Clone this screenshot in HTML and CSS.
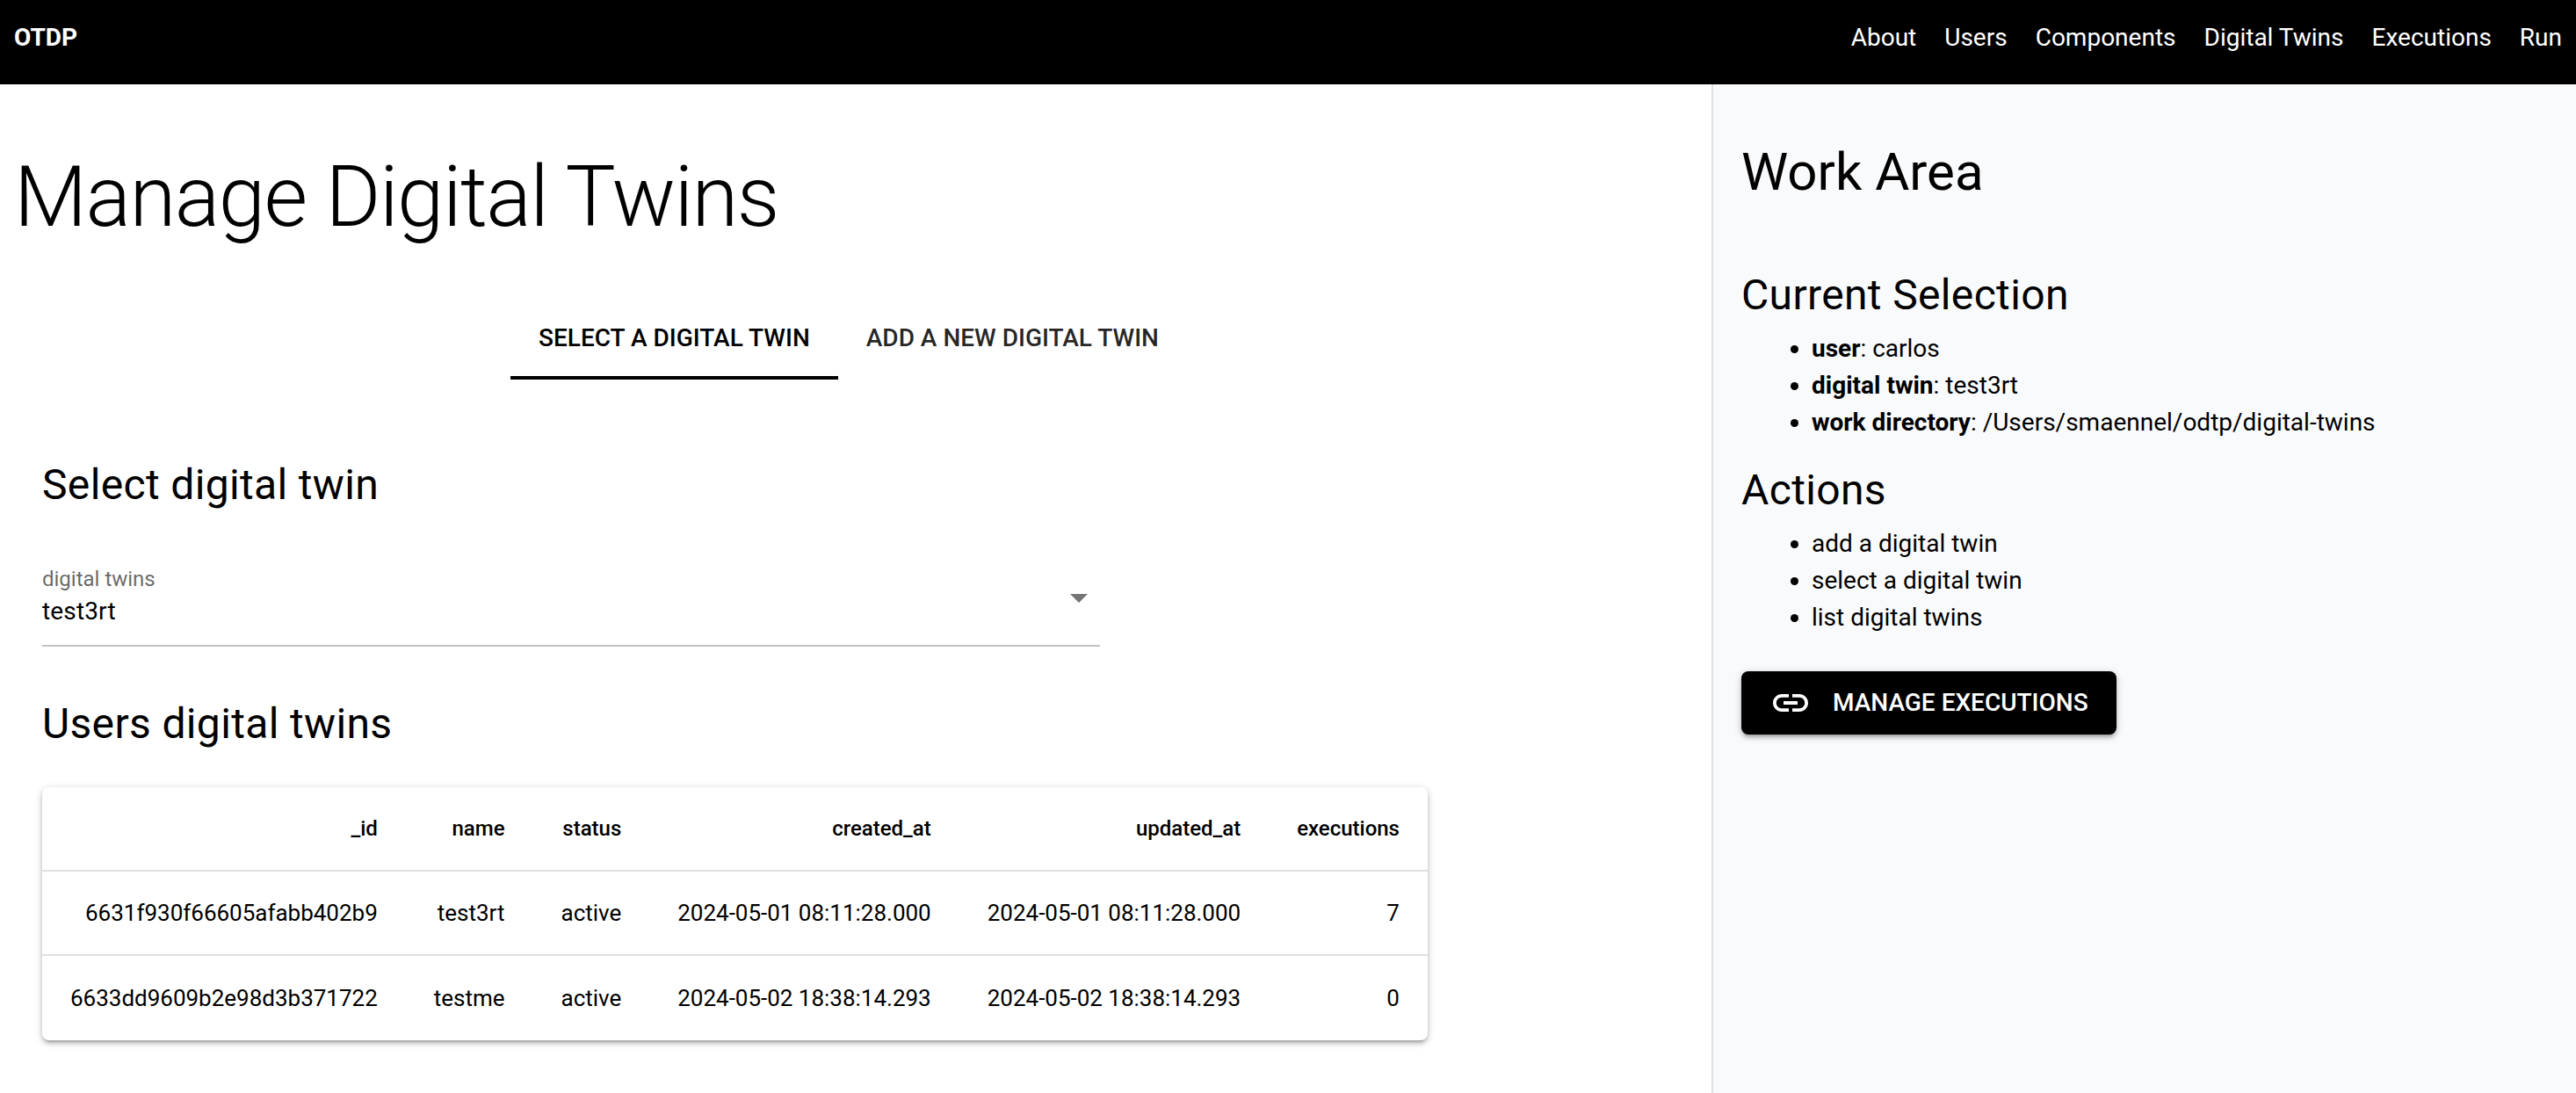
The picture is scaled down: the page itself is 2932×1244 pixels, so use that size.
FILE: index.html
```html
<!DOCTYPE html>
<html lang="en">
<head>
<meta charset="utf-8">
<title>OTDP</title>
<link rel="stylesheet" href="styles.css">
</head>
<body>
<header class="topbar">
  <a class="brand">OTDP</a>
  <nav class="nav">
    <a>About</a><a>Users</a><a>Components</a><a>Digital Twins</a><a>Executions</a><a>Run</a>
  </nav>
</header>
<main class="layout">
  <section class="content">
    <h1 class="page-title">Manage Digital Twins</h1>
    <div class="tabs">
      <div class="tab tab-active">Select a digital twin</div>
      <div class="tab">Add a new digital twin</div>
    </div>
    <div class="panel">
      <h2 class="heading first">Select digital twin</h2>
      <div class="field">
        <div class="field-text">
          <div class="field-label">digital twins</div>
          <div class="field-value">test3rt</div>
        </div>
        <svg class="field-arrow" viewBox="0 0 24 24"><path d="M7 10l5 5 5-5z"/></svg>
      </div>
      <h2 class="heading second">Users digital twins</h2>
      <div class="card">
        <table class="table">
          <thead>
            <tr><th>_id</th><th>name</th><th>status</th><th>created_at</th><th>updated_at</th><th>executions</th></tr>
          </thead>
          <tbody>
            <tr><td>6631f930f66605afabb402b9</td><td>test3rt</td><td>active</td><td>2024-05-01 08:11:28.000</td><td>2024-05-01 08:11:28.000</td><td>7</td></tr>
            <tr><td>6633dd9609b2e98d3b371722</td><td>testme</td><td>active</td><td>2024-05-02 18:38:14.293</td><td>2024-05-02 18:38:14.293</td><td>0</td></tr>
          </tbody>
        </table>
      </div>
    </div>
  </section>
  <aside class="side">
    <h2 class="side-title">Work Area</h2>
    <h3 class="side-heading current">Current Selection</h3>
    <ul class="side-list">
      <li><strong>user</strong>: carlos</li>
      <li><strong>digital twin</strong>: test3rt</li>
      <li><strong>work directory</strong>: /Users/smaennel/odtp/digital-twins</li>
    </ul>
    <h3 class="side-heading actions">Actions</h3>
    <ul class="side-list">
      <li>add a digital twin</li>
      <li>select a digital twin</li>
      <li>list digital twins</li>
    </ul>
    <a class="button">
      <svg class="button-icon" viewBox="0 0 24 24"><path d="M3.9 12c0-1.71 1.39-3.1 3.1-3.1h4V7H7c-2.76 0-5 2.24-5 5s2.24 5 5 5h4v-1.9H7c-1.71 0-3.1-1.39-3.1-3.1zM8 13h8v-2H8v2zm9-6h-4v1.9h4c1.71 0 3.1 1.39 3.1 3.1s-1.39 3.1-3.1 3.1h-4V17h4c2.76 0 5-2.24 5-5s-2.24-5-5-5z"/></svg>
      <span>Manage Executions</span>
    </a>
  </aside>
</main>
</body>
</html>
```

FILE: styles.css
```css
* { box-sizing: border-box; }
html, body { margin: 0; height: 100%; }
body {
  font-family: Roboto, "Liberation Sans", sans-serif;
  font-size: 28px;
  line-height: 42px;
  color: #000;
  background: #fff;
  overflow: hidden;
  display: flex;
  flex-direction: column;
}
.topbar {
  height: 96px;
  flex: none;
  background: #000;
  color: #fff;
  display: flex;
  justify-content: space-between;
  padding: 22px 16px 0;
}
.brand { font-weight: 700; }
.nav { display: flex; gap: 32px; }
.layout { flex: 1; display: flex; min-height: 0; }
.content { width: 1948px; flex: none; padding-right: 16px; }
.page-title {
  margin: 80px 0 64px 16px;
  font-size: 96px;
  line-height: 96px;
  font-weight: 300;
  letter-spacing: -1.5px;
}
.tabs { display: flex; justify-content: center; height: 96px; }
.tab {
  padding: 0 32px;
  line-height: 98px;
  font-weight: 500;
  text-transform: uppercase;
  color: rgba(0, 0, 0, .87);
  border-bottom: 4px solid transparent;
}
.tab-active { color: #000; border-bottom-color: #000; }
.panel { padding-left: 48px; }
.heading { margin: 0; font-size: 48px; line-height: 48px; font-weight: 400; letter-spacing: .35px; }
.heading.first { margin-top: 96px; margin-bottom: 48px; }
.heading.second { margin-top: 64px; margin-bottom: 48px; }
.field {
  width: 1204px;
  height: 112px;
  border-bottom: 2px solid rgba(0, 0, 0, .24);
  display: flex;
  justify-content: space-between;
}
.field-text { padding-top: 17px; }
.field-label { font-size: 24px; line-height: 36px; color: rgba(0, 0, 0, .6); }
.field-value { line-height: 38px; letter-spacing: .15px; }
.field-arrow { width: 48px; height: 48px; margin-top: 32px; fill: rgba(0, 0, 0, .54); }
.card {
  display: inline-block;
  background: #fff;
  border-radius: 8px;
  box-shadow: 0 2px 10px rgba(0, 0, 0, .2), 0 4px 4px rgba(0, 0, 0, .14), 0 6px 2px -4px rgba(0, 0, 0, .12);
  overflow: hidden;
}
.table { border-collapse: separate; border-spacing: 0; letter-spacing: -.01px; }
.table th, .table td {
  padding: 0 32px;
  height: 96px;
  text-align: right;
  white-space: nowrap;
  border-bottom: 2px solid rgba(0, 0, 0, .12);
}
.table th { font-size: 24px; font-weight: 500; }
.table td { font-size: 26px; }
.table tbody tr:last-child td { border-bottom: 0; }
.side {
  flex: 1;
  background: #f9fafc;
  border-left: 2px solid #e0e0e0;
  padding-left: 32px;
}
.side-title { margin: 70px 0 0; font-size: 60px; line-height: 60px; font-weight: 400; }
.side-heading { margin: 0; font-size: 48px; line-height: 48px; font-weight: 400; letter-spacing: .35px; }
.current { margin-top: 86px; }
.actions { margin-top: 32px; }
.side-list { margin: 16px 0 0; padding-left: 80px; }
.button {
  display: inline-flex;
  align-items: center;
  gap: 24px;
  height: 72px;
  margin-top: 40px;
  padding: 0 32px;
  background: #000;
  color: #fff;
  border-radius: 8px;
  font-weight: 500;
  text-transform: uppercase;
  box-shadow: 0 2px 10px rgba(0, 0, 0, .2), 0 4px 4px rgba(0, 0, 0, .14), 0 6px 2px -4px rgba(0, 0, 0, .12);
}
.button-icon { width: 48px; height: 48px; fill: #fff; }
```
